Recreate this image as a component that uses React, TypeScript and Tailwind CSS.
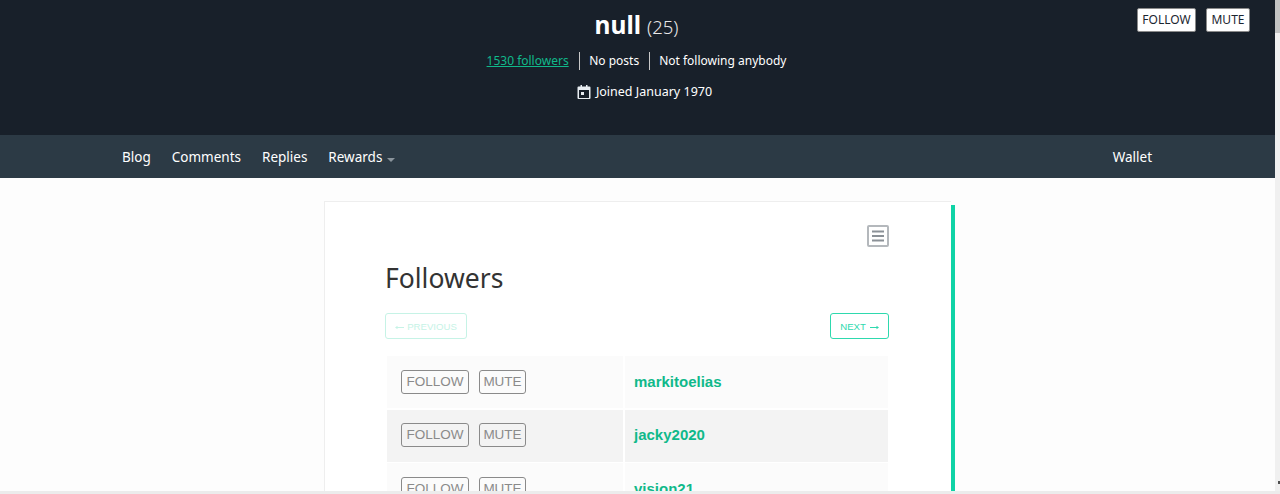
const followers = ['markitoelias', 'jacky2020', 'vision21'];

function HeaderButton({ label, width }: { label: string; width: string }) {
  return (
    <button className={`h-[24px] rounded-[2px] border border-[#8a8a8a] bg-white text-[12px] leading-none text-[#1b2530] ${width}`}>
      {label}
    </button>
  );
}

function RowButton({ label, width }: { label: string; width: string }) {
  return (
    <button className={`h-[24px] rounded-[3px] border border-[#8a8a8a] text-[13.5px] leading-none text-[#8a8a8a] ${width}`}>
      {label}
    </button>
  );
}

export default function App() {
  return (
    <div className="relative h-[494px] w-[1280px] overflow-hidden bg-[#fdfdfd] font-['Liberation_Sans',sans-serif]">
      <div className="w-[1275px]">
        <header className="relative flex h-[135px] flex-col items-center bg-[#18202a] font-['Noto_Sans',sans-serif] text-white">
          <h1 className="mt-[8px] mr-[2px] flex h-[34px] items-baseline gap-[6px] text-[24.5px] font-bold leading-[34px]">
            null <span className="text-[18.5px] font-light text-[#e8e8e8]">(25)</span>
          </h1>
          <div className="mt-[10px] mr-[2px] flex h-[18px] items-center text-[12px] leading-[18px]">
            <a className="border-r border-[#c8c8c8] pr-[10px] text-[#10b98a] underline">1530 followers</a>
            <span className="border-r border-[#c8c8c8] pl-[9.5px] pr-[9.5px]">No posts</span>
            <span className="pl-[9.5px]">Not following anybody</span>
          </div>
          <div className="mt-[13px] ml-[14px] flex h-[18px] items-center gap-[5px] text-[12.5px] leading-[18px]">
            <svg width="14" height="16" viewBox="0 0 14 16" fill="#e8edf2">
              <path d="M1.500 2.500h2V1h1.500v1.500h4V1h1.500v1.500h2a1 1 0 0 1 1 1v10.500a1 1 0 0 1-1 1h-11a1 1 0 0 1-1-1V3.500a1 1 0 0 1 1-1zM2 6v8h10V6zm2 2h3v3H4z" fillRule="evenodd" />
            </svg>
            Joined January 1970
          </div>
          <div className="absolute right-[25px] top-[8px] flex gap-[10px]">
            <HeaderButton label="FOLLOW" width="w-[59px]" />
            <HeaderButton label="MUTE" width="w-[44px]" />
          </div>
        </header>

        <nav className="flex h-[43px] items-center justify-between bg-[#2c3a45] pl-[122px] pr-[123px] pt-[2px] font-['Noto_Sans',sans-serif] text-[13.5px] text-white">
          <div className="flex items-center gap-[21px]">
            <a>Blog</a>
            <a>Comments</a>
            <a>Replies</a>
            <a className="flex items-center gap-[5px]">
              Rewards
              <span className="mt-[5px] h-0 w-0 border-x-[4px] border-t-[4px] border-x-transparent border-t-[#8a949c]" />
            </a>
          </div>
          <a>Wallet</a>
        </nav>

        <main className="mt-[23px] ml-[324px] flex w-[631px] items-stretch">
          <section className="h-[400px] w-[627px] border-l border-t border-[#eeeeee] bg-white pl-[60px] pr-[62px]">
            <div className="flex justify-end pt-[23px]">
              <svg width="22" height="22" viewBox="0 0 22 22" fill="none">
                <rect x="1" y="1" width="20" height="20" rx="1" strokeWidth="2" stroke="#b4b8bc" />
                <path d="M5 6.500h12M5 11h12M5 15.500h12" strokeWidth="2" stroke="#8b9197" />
              </svg>
            </div>
            <h2 className="mt-[13px] font-['Noto_Sans',sans-serif] text-[26.5px] leading-[36px] text-[#333333]">Followers</h2>
            <div className="mt-[17px] flex justify-between">
              <button className="flex h-[26px] w-[82px] items-center justify-center gap-[3px] rounded-[3px] border border-[#c6f3e6] pt-[2px] text-[9.6px] leading-none text-[#c6f3e6]">
                <svg width="9" height="5" viewBox="0 0 9 5" fill="currentColor">
                  <path d="M9 2H2.500V.8L0 2.500l2.500 1.700V3H9z" />
                </svg>
                PREVIOUS
              </button>
              <button className="flex h-[26px] w-[59px] items-center justify-center gap-[4px] rounded-[3px] border border-[#2ed9ae] pt-[2px] text-[9.6px] leading-none text-[#2ed9ae]">
                NEXT
                <svg width="9" height="5" viewBox="0 0 9 5" fill="currentColor">
                  <path d="M0 2h6.500V.8L9 2.500 6.500 4.200V3H0z" />
                </svg>
              </button>
            </div>
            <div className="mt-[17px] ml-[2px] flex w-[501px] flex-col gap-[1.5px]">
              {followers.map((name, i) => (
                <div key={name} className={`flex h-[52px] ${i % 2 === 1 ? 'bg-[#f3f3f3]' : 'bg-[#fbfbfb]'}`}>
                  <div className="flex w-[236px] items-center gap-[10px] pb-[1px] pl-[14px]">
                    <RowButton label="FOLLOW" width="w-[68px]" />
                    <RowButton label="MUTE" width="w-[47px]" />
                  </div>
                  <div className="flex flex-1 items-center border-l-2 border-white pl-[9px] text-[15px] font-bold text-[#10b98a]">
                    {name}
                  </div>
                </div>
              ))}
            </div>
          </section>
          <div className="mt-[4px] w-[4px] bg-[#0fd3a6]" />
        </main>
      </div>

      {/* browser scrollbars */}
      <div className="absolute right-0 top-0 h-full w-[5px] bg-[#f0f0f0]">
        <div className="h-[33px] bg-[#c4c4c4]" />
        <div className="absolute right-0 top-[481px] h-[3px] w-[2px] bg-[#505050]" />
      </div>
      <div className="absolute bottom-0 left-0 h-[3px] w-full bg-[#ececec]" />
    </div>
  );
}
